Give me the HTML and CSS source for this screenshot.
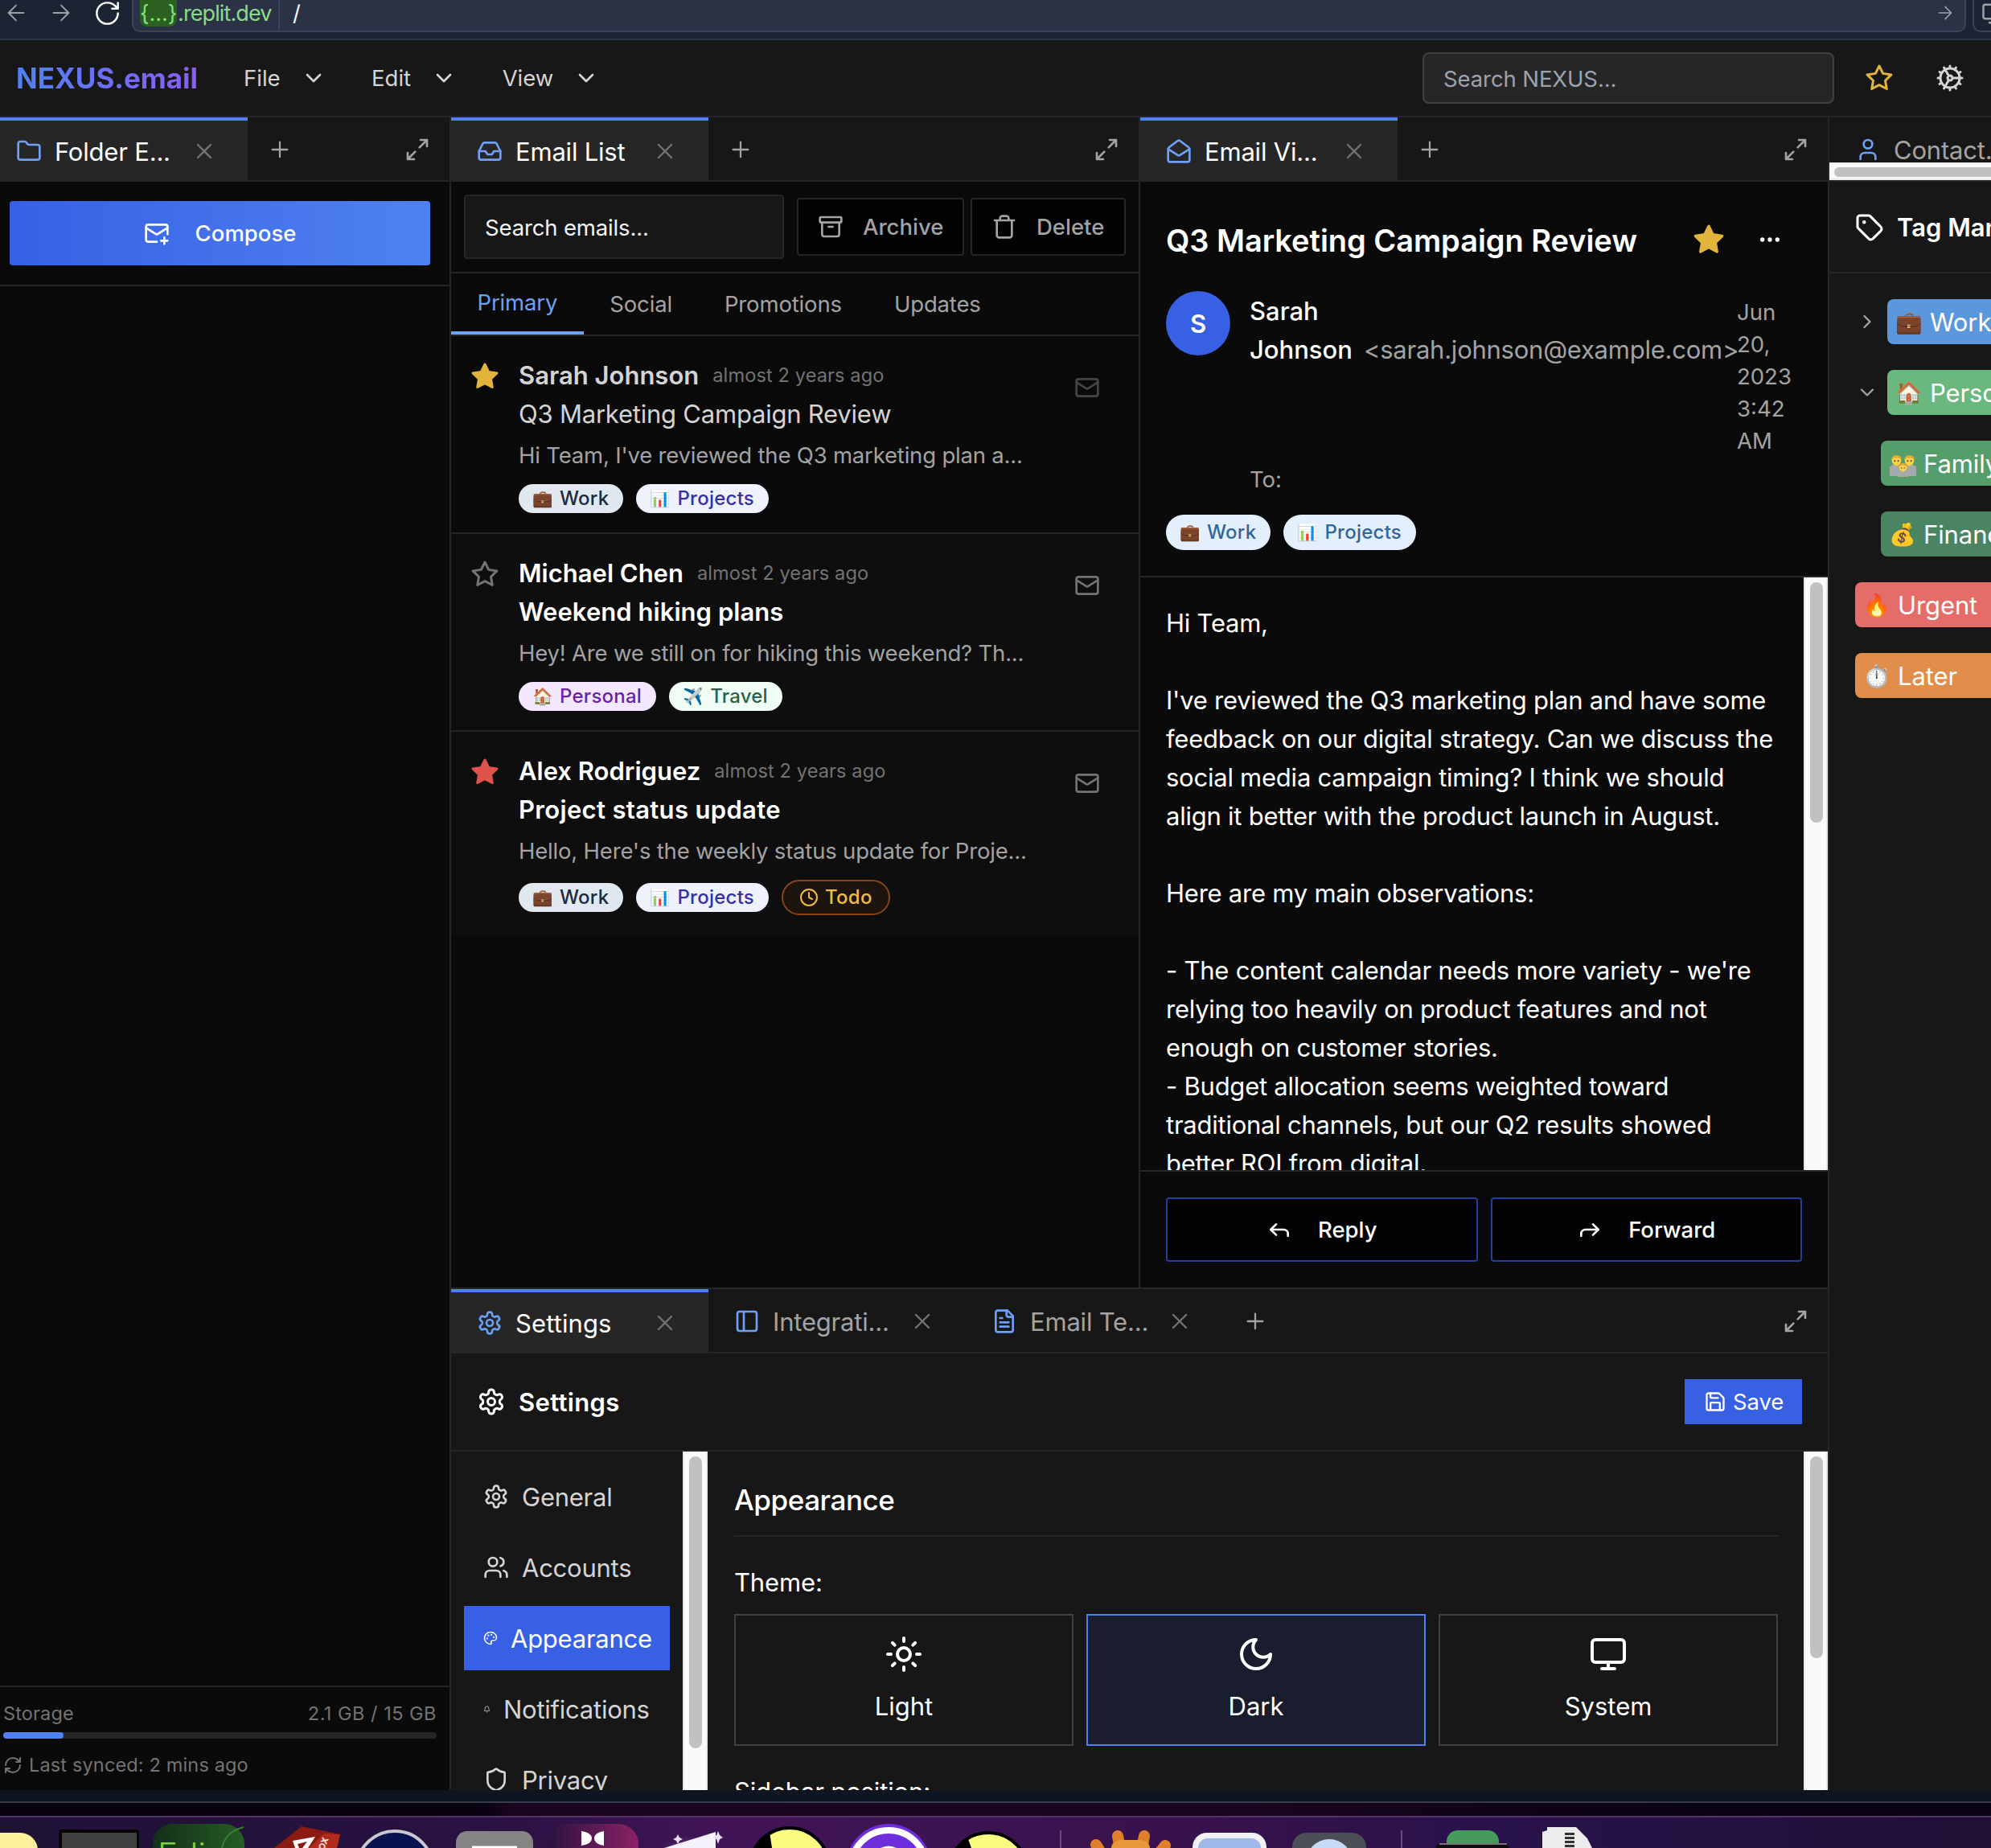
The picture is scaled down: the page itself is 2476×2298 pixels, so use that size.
FILE: index.html
```html
<!DOCTYPE html>
<html lang="en">
<head>
<meta charset="utf-8">
<title>NEXUS.email</title>
<link rel="stylesheet" href="styles.css">
</head>
<body>
<svg class="defs" aria-hidden="true">
  <symbol id="left" viewBox="0 0 24 24"><path d="m12 19-7-7 7-7M19 12H5"/></symbol>
  <symbol id="right" viewBox="0 0 24 24"><path d="m12 5 7 7-7 7M5 12h14"/></symbol>
  <symbol id="reload" viewBox="0 0 24 24"><path d="M21 12a9 9 0 1 1-9-9c2.52 0 4.93 1 6.74 2.74L21 8M21 3v5h-5"/></symbol>
  <symbol id="chev-down" viewBox="0 0 24 24"><path d="m6 9 6 6 6-6"/></symbol>
  <symbol id="chev-right" viewBox="0 0 24 24"><path d="m9 18 6-6-6-6"/></symbol>
  <symbol id="star" viewBox="0 0 24 24"><path d="m12 2 3.09 6.26L22 9.27l-5 4.87 1.18 6.88L12 17.77l-6.18 3.25L7 14.14 2 9.27l6.91-1.01L12 2z"/></symbol>
  <symbol id="cog" viewBox="0 0 24 24"><path d="M12 20a8 8 0 1 0 0-16 8 8 0 0 0 0 16ZM12 14a2 2 0 1 0 0-4 2 2 0 0 0 0 4ZM12 2v2M12 22v-2M17 20.66l-1-1.73M11 10.27 7 3.34M20.66 17l-1.73-1M3.34 7l1.73 1M14 12h8M2 12h2M20.66 7l-1.73 1M3.34 17l1.73-1M17 3.34l-1 1.73M11 13.73l-4 6.93"/></symbol>
  <symbol id="folder" viewBox="0 0 24 24"><path d="M20 20a2 2 0 0 0 2-2V8a2 2 0 0 0-2-2h-7.9a2 2 0 0 1-1.69-.9L9.6 3.9A2 2 0 0 0 7.93 3H4a2 2 0 0 0-2 2v13a2 2 0 0 0 2 2Z"/></symbol>
  <symbol id="close" viewBox="0 0 24 24"><path d="M18 6 6 18M6 6l12 12"/></symbol>
  <symbol id="plus" viewBox="0 0 24 24"><path d="M5 12h14M12 5v14"/></symbol>
  <symbol id="expand" viewBox="0 0 24 24"><path d="M15 3h6v6M9 21H3v-6M21 3l-7 7M3 21l7-7"/></symbol>
  <symbol id="inbox" viewBox="0 0 24 24"><path d="M22 12h-6l-2 3h-4l-2-3H2"/><path d="M5.45 5.11 2 12v6a2 2 0 0 0 2 2h16a2 2 0 0 0 2-2v-6l-3.45-6.89A2 2 0 0 0 16.76 4H7.24a2 2 0 0 0-1.79 1.11z"/></symbol>
  <symbol id="mail-open" viewBox="0 0 24 24"><path d="M21.2 8.4c.5.38.8.97.8 1.6v10a2 2 0 0 1-2 2H4a2 2 0 0 1-2-2V10a2 2 0 0 1 .8-1.6l8-6a2 2 0 0 1 2.4 0l8 6Z"/><path d="m22 10-8.97 5.7a1.94 1.94 0 0 1-2.06 0L2 10"/></symbol>
  <symbol id="mail" viewBox="0 0 24 24"><rect width="20" height="16" x="2" y="4" rx="2"/><path d="m22 7-8.97 5.7a1.94 1.94 0 0 1-2.06 0L2 7"/></symbol>
  <symbol id="mail-plus" viewBox="0 0 24 24"><path d="M22 13V6a2 2 0 0 0-2-2H4a2 2 0 0 0-2 2v12c0 1.1.9 2 2 2h8"/><path d="m22 7-8.97 5.7a1.94 1.94 0 0 1-2.06 0L2 7M19 16v6M16 19h6"/></symbol>
  <symbol id="archive" viewBox="0 0 24 24"><rect width="20" height="5" x="2" y="3" rx="1"/><path d="M4 8v11a2 2 0 0 0 2 2h12a2 2 0 0 0 2-2V8M10 12h4"/></symbol>
  <symbol id="trash" viewBox="0 0 24 24"><path d="M3 6h18M19 6v14c0 1-1 2-2 2H7c-1 0-2-1-2-2V6M8 6V4c0-1 1-2 2-2h4c1 0 2 1 2 2v2"/></symbol>
  <symbol id="dots" viewBox="0 0 24 24"><circle cx="12" cy="12" r="1"/><circle cx="19" cy="12" r="1"/><circle cx="5" cy="12" r="1"/></symbol>
  <symbol id="user" viewBox="0 0 24 24"><path d="M19 21v-2a4 4 0 0 0-4-4H9a4 4 0 0 0-4 4v2"/><circle cx="12" cy="7" r="4"/></symbol>
  <symbol id="users" viewBox="0 0 24 24"><path d="M16 21v-2a4 4 0 0 0-4-4H6a4 4 0 0 0-4 4v2"/><circle cx="9" cy="7" r="4"/><path d="M22 21v-2a4 4 0 0 0-3-3.87M16 3.13a4 4 0 0 1 0 7.75"/></symbol>
  <symbol id="tag" viewBox="0 0 24 24"><path d="M12.586 2.586A2 2 0 0 0 11.172 2H4a2 2 0 0 0-2 2v7.172a2 2 0 0 0 .586 1.414l8.704 8.704a2.426 2.426 0 0 0 3.42 0l6.58-6.58a2.426 2.426 0 0 0 0-3.42z"/><circle cx="7.5" cy="7.5" r=".5" fill="currentColor"/></symbol>
  <symbol id="reply" viewBox="0 0 24 24"><path d="m9 17-5-5 5-5"/><path d="M20 18v-2a4 4 0 0 0-4-4H4"/></symbol>
  <symbol id="forward" viewBox="0 0 24 24"><path d="m15 17 5-5-5-5"/><path d="M4 18v-2a4 4 0 0 1 4-4h12"/></symbol>
  <symbol id="gear" viewBox="0 0 24 24"><path d="M12.22 2h-.44a2 2 0 0 0-2 2v.18a2 2 0 0 1-1 1.73l-.43.25a2 2 0 0 1-2 0l-.15-.08a2 2 0 0 0-2.73.73l-.22.38a2 2 0 0 0 .73 2.73l.15.1a2 2 0 0 1 1 1.72v.51a2 2 0 0 1-1 1.74l-.15.09a2 2 0 0 0-.73 2.73l.22.38a2 2 0 0 0 2.73.73l.15-.08a2 2 0 0 1 2 0l.43.25a2 2 0 0 1 1 1.73V20a2 2 0 0 0 2 2h.44a2 2 0 0 0 2-2v-.18a2 2 0 0 1 1-1.73l.43-.25a2 2 0 0 1 2 0l.15.08a2 2 0 0 0 2.73-.73l.22-.39a2 2 0 0 0-.73-2.73l-.15-.08a2 2 0 0 1-1-1.74v-.5a2 2 0 0 1 1-1.74l.15-.09a2 2 0 0 0 .73-2.73l-.22-.38a2 2 0 0 0-2.73-.73l-.15.08a2 2 0 0 1-2 0l-.43-.25a2 2 0 0 1-1-1.73V4a2 2 0 0 0-2-2z"/><circle cx="12" cy="12" r="3"/></symbol>
  <symbol id="panel" viewBox="0 0 24 24"><rect width="18" height="18" x="3" y="3" rx="2"/><path d="M9 3v18"/></symbol>
  <symbol id="file" viewBox="0 0 24 24"><path d="M15 2H6a2 2 0 0 0-2 2v16a2 2 0 0 0 2 2h12a2 2 0 0 0 2-2V7Z"/><path d="M14 2v4a2 2 0 0 0 2 2h4M10 9H8M16 13H8M16 17H8"/></symbol>
  <symbol id="save" viewBox="0 0 24 24"><path d="M15.2 3a2 2 0 0 1 1.4.6l3.8 3.8a2 2 0 0 1 .6 1.4V19a2 2 0 0 1-2 2H5a2 2 0 0 1-2-2V5a2 2 0 0 1 2-2z"/><path d="M17 21v-7a1 1 0 0 0-1-1H8a1 1 0 0 0-1 1v7M7 3v4a1 1 0 0 0 1 1h7"/></symbol>
  <symbol id="palette" viewBox="0 0 24 24"><circle cx="13.5" cy="6.5" r=".5"/><circle cx="17.5" cy="10.5" r=".5"/><circle cx="8.5" cy="7.5" r=".5"/><circle cx="6.5" cy="12.5" r=".5"/><path d="M12 2C6.5 2 2 6.5 2 12s4.5 10 10 10c.926 0 1.648-.746 1.648-1.688 0-.437-.18-.835-.437-1.125-.29-.289-.438-.652-.438-1.125a1.64 1.64 0 0 1 1.668-1.668h1.996c3.051 0 5.555-2.503 5.555-5.554C21.965 6.012 17.461 2 12 2z"/></symbol>
  <symbol id="bell" viewBox="0 0 24 24"><path d="M6 8a6 6 0 0 1 12 0c0 7 3 9 3 9H3s3-2 3-9M10.3 21a1.94 1.94 0 0 0 3.4 0"/></symbol>
  <symbol id="shield" viewBox="0 0 24 24"><path d="M20 13c0 5-3.5 7.5-7.66 8.95a1 1 0 0 1-.67-.01C7.5 20.5 4 18 4 13V6a1 1 0 0 1 1-1c2 0 4.5-1.2 6.24-2.72a1.17 1.17 0 0 1 1.52 0C14.51 3.81 17 5 19 5a1 1 0 0 1 1 1z"/></symbol>
  <symbol id="sun" viewBox="0 0 24 24"><circle cx="12" cy="12" r="4"/><path d="M12 2v2M12 20v2M4.93 4.93l1.41 1.41M17.66 17.66l1.41 1.41M2 12h2M20 12h2M6.34 17.66l-1.41 1.41M19.07 4.93l-1.41 1.41"/></symbol>
  <symbol id="moon" viewBox="0 0 24 24"><path d="M12 3a6 6 0 0 0 9 9 9 9 0 1 1-9-9Z"/></symbol>
  <symbol id="monitor" viewBox="0 0 24 24"><rect width="20" height="14" x="2" y="3" rx="2"/><path d="M8 21h8M12 17v4"/></symbol>
  <symbol id="sync" viewBox="0 0 24 24"><path d="M3 12a9 9 0 0 1 9-9 9.75 9.75 0 0 1 6.74 2.74L21 8M21 3v5h-5M21 12a9 9 0 0 1-9 9 9.75 9.75 0 0 1-6.74-2.74L3 16M8 16H3v5"/></symbol>
  <symbol id="clock" viewBox="0 0 24 24"><circle cx="12" cy="12" r="10"/><path d="M12 6v6l4 2"/></symbol>
  <symbol id="person" viewBox="0 0 16 20"><path d="M0 20v-4q0-5 8-5t8 5v4z" fill="#a4a9ac"/><path d="M6 10h4v3H6z" fill="#e8b93c"/><circle cx="8" cy="6.5" r="5.500" fill="#fbd34f"/><path d="M2 6Q2 0 8 0t6 6q-2-3-6-3T2 6z" fill="#e3a92c"/><circle cx="6" cy="7" r=".9" fill="#4b3514"/><circle cx="10" cy="7" r=".9" fill="#4b3514"/></symbol>
</svg>

<div class="browser">
  <svg class="i nav-back"><use href="#left"/></svg>
  <svg class="i nav-fwd"><use href="#right"/></svg>
  <svg class="i nav-reload"><use href="#reload"/></svg>
  <div class="url">
    <span class="host"><span class="chip">{...}</span><span class="domain">.replit.dev</span></span>
    <span class="path">/</span>
    <svg class="i go"><use href="#right"/></svg>
  </div>
  <div class="devbox"><svg class="i"><use href="#monitor"/></svg></div>
</div>

<header class="top">
  <div class="brand">NEXUS.email</div>
  <nav class="menus">
    <span class="menu"><span>File</span><svg class="i s32"><use href="#chev-down"/></svg></span>
    <span class="menu"><span>Edit</span><svg class="i s32"><use href="#chev-down"/></svg></span>
    <span class="menu"><span>View</span><svg class="i s32"><use href="#chev-down"/></svg></span>
  </nav>
  <div class="topsearch">Search NEXUS...</div>
  <svg class="i s36 gold"><use href="#star"/></svg>
  <svg class="i s36 cogicon"><use href="#cog"/></svg>
</header>

<main class="app">
  <section class="panel folders">
    <div class="tabbar">
      <div class="tab active"><svg class="i s32"><use href="#folder"/></svg><span class="label">Folder E...</span><svg class="i s32 x"><use href="#close"/></svg></div>
      <svg class="i s32 add"><use href="#plus"/></svg>
      <svg class="i s32 max"><use href="#expand"/></svg>
    </div>
    <div class="composebox"><div class="compose"><svg class="i s32"><use href="#mail-plus"/></svg><span>Compose</span></div></div>
    <div class="storage">
      <div class="quota"><span>Storage</span><span class="used">2.1 GB / 15 GB</span></div>
      <div class="meter"><div class="fill" style="width:14%"></div></div>
      <div class="synced"><svg class="i"><use href="#sync"/></svg><span>Last synced: 2 mins ago</span></div>
    </div>
  </section>

  <div class="center">
    <div class="upper">
      <section class="panel list">
        <div class="tabbar">
          <div class="tab active"><svg class="i s32"><use href="#inbox"/></svg><span class="label">Email List</span><svg class="i s32 x"><use href="#close"/></svg></div>
          <svg class="i s32 add"><use href="#plus"/></svg>
          <svg class="i s32 max"><use href="#expand"/></svg>
        </div>
        <div class="tools">
          <div class="find">Search emails...</div>
          <div class="actions">
            <div class="tool"><svg class="i s32"><use href="#archive"/></svg><span>Archive</span></div>
            <div class="tool del"><svg class="i s32"><use href="#trash"/></svg><span>Delete</span></div>
          </div>
        </div>
        <div class="filters"><span class="on">Primary</span><span>Social</span><span>Promotions</span><span>Updates</span></div>
        <article class="mail read">
          <svg class="i s36 st solid gold"><use href="#star"/></svg>
          <div class="info">
            <div class="who"><b>Sarah Johnson</b><time>almost 2 years ago</time></div>
            <div class="subj">Q3 Marketing Campaign Review</div>
            <div class="prev">Hi Team, I've reviewed the Q3 marketing plan a...</div>
            <div class="pills"><span class="pill work"><i>💼</i>Work</span><span class="pill proj"><i>📊</i>Projects</span></div>
          </div>
          <svg class="i s32 env"><use href="#mail"/></svg>
        </article>
        <article class="mail">
          <svg class="i s36 st"><use href="#star"/></svg>
          <div class="info">
            <div class="who"><b>Michael Chen</b><time>almost 2 years ago</time></div>
            <div class="subj">Weekend hiking plans</div>
            <div class="prev">Hey! Are we still on for hiking this weekend? Th...</div>
            <div class="pills"><span class="pill pers"><i>🏠</i>Personal</span><span class="pill trav"><i>✈️</i>Travel</span></div>
          </div>
          <svg class="i s32 env"><use href="#mail"/></svg>
        </article>
        <article class="mail last">
          <svg class="i s36 st solid red"><use href="#star"/></svg>
          <div class="info">
            <div class="who"><b>Alex Rodriguez</b><time>almost 2 years ago</time></div>
            <div class="subj wide">Project status update</div>
            <div class="prev">Hello, Here's the weekly status update for Proje...</div>
            <div class="pills"><span class="pill work"><i>💼</i>Work</span><span class="pill proj"><i>📊</i>Projects</span><span class="pill todo"><svg class="i"><use href="#clock"/></svg>Todo</span></div>
          </div>
          <svg class="i s32 env"><use href="#mail"/></svg>
        </article>
      </section>

      <section class="panel view">
        <div class="tabbar">
          <div class="tab active"><svg class="i s32"><use href="#mail-open"/></svg><span class="label">Email Vi...</span><svg class="i s32 x"><use href="#close"/></svg></div>
          <svg class="i s32 add"><use href="#plus"/></svg>
          <svg class="i s32 max"><use href="#expand"/></svg>
        </div>
        <div class="vhead">
          <div class="vtitle"><h1>Q3 Marketing Campaign Review</h1><svg class="i s40 solid gold"><use href="#star"/></svg><svg class="i s32 more"><use href="#dots"/></svg></div>
          <div class="from">
            <div class="avatar">S</div>
            <div class="name">Sarah<br>Johnson</div>
            <div class="addr">&lt;sarah.johnson@example.com&gt;</div>
            <div class="date">Jun<br>20,<br>2023<br>3:42<br>AM</div>
          </div>
          <div class="to">To:</div>
          <div class="pills"><span class="pill blue"><i>💼</i>Work</span><span class="pill blue"><i>📊</i>Projects</span></div>
        </div>
        <div class="vbody">
          <div class="text">Hi Team,<br><br>I've reviewed the Q3 marketing plan and have some<br>feedback on our digital strategy. Can we discuss the<br>social media campaign timing? I think we should<br>align it better with the product launch in August.<br><br>Here are my main observations:<br><br>- The content calendar needs more variety - we're<br>relying too heavily on product features and not<br>enough on customer stories.<br>- Budget allocation seems weighted toward<br>traditional channels, but our Q2 results showed<br>better ROI from digital.</div>
          <div class="sbar narrow"><div class="thumb th-mail"></div></div>
        </div>
        <div class="reply">
          <div class="btn"><svg class="i s32"><use href="#reply"/></svg><span>Reply</span></div>
          <div class="btn"><svg class="i s32"><use href="#forward"/></svg><span>Forward</span></div>
        </div>
      </section>
    </div>

    <section class="settings">
      <div class="tabbar">
        <div class="tab active"><svg class="i s32"><use href="#gear"/></svg><span class="label roomy">Settings</span><svg class="i s32 x"><use href="#close"/></svg></div>
        <div class="tab"><svg class="i s32"><use href="#panel"/></svg><span class="label">Integrati...</span><svg class="i s32 x"><use href="#close"/></svg></div>
        <div class="tab"><svg class="i s32"><use href="#file"/></svg><span class="label">Email Te...</span><svg class="i s32 x"><use href="#close"/></svg></div>
        <svg class="i s32 add"><use href="#plus"/></svg>
        <svg class="i s32 max"><use href="#expand"/></svg>
      </div>
      <div class="shead"><svg class="i s36"><use href="#gear"/></svg><h2>Settings</h2><div class="save"><svg class="i s28"><use href="#save"/></svg><span>Save</span></div></div>
      <div class="sbody">
        <div class="snav">
          <div class="sitem"><svg class="i s32"><use href="#gear"/></svg><span>General</span></div>
          <div class="sitem"><svg class="i s32"><use href="#users"/></svg><span>Accounts</span></div>
          <div class="sitem sel"><svg class="i s18"><use href="#palette"/></svg><span>Appearance</span></div>
          <div class="sitem"><svg class="i s9"><use href="#bell"/></svg><span>Notifications</span></div>
          <div class="sitem"><svg class="i s32"><use href="#shield"/></svg><span>Privacy</span></div>
        </div>
        <div class="sbar"><div class="thumb th-nav"></div></div>
        <div class="smain">
          <h3>Appearance</h3>
          <div class="lbl">Theme:</div>
          <div class="themes">
            <div class="theme"><svg class="i s48"><use href="#sun"/></svg><span>Light</span></div>
            <div class="theme on"><svg class="i s48"><use href="#moon"/></svg><span>Dark</span></div>
            <div class="theme"><svg class="i s48"><use href="#monitor"/></svg><span>System</span></div>
          </div>
          <div class="lbl">Sidebar position:</div>
        </div>
        <div class="sbar narrow"><div class="thumb th-main"></div></div>
      </div>
    </section>
  </div>

  <section class="tags">
    <div class="tabclip"><div class="tab"><svg class="i s32"><use href="#user"/></svg><span class="label">Contact...</span></div></div>
    <div class="hbar"><div class="hthumb"></div></div>
    <div class="thead"><svg class="i s36"><use href="#tag"/></svg><span>Tag Manager</span></div>
    <div class="tlist">
      <div class="trow parent"><svg class="i s28"><use href="#chev-right"/></svg><span class="tg c1"><i>💼</i>Work</span></div>
      <div class="trow parent"><svg class="i s28"><use href="#chev-down"/></svg><span class="tg c2"><i>🏠</i>Personal</span></div>
      <div class="trow child"><span class="tg c3"><svg class="family" viewBox="0 0 33 33"><use href="#person" x="0" y="1" width="17" height="31"/><use href="#person" x="16" y="1" width="17" height="31"/><path d="M0 20h33v12H0z" fill="#a4a9ac"/><use href="#person" x="9" y="16" width="15" height="17"/></svg>Family</span></div>
      <div class="trow child"><span class="tg c4"><i>💰</i>Finance</span></div>
      <div class="trow"><span class="tg c5"><i>🔥</i>Urgent</span></div>
      <div class="trow"><span class="tg c6"><i>⏱️</i>Later</span></div>
    </div>
  </section>
</main>

<footer class="desk">
  <div class="edge"></div>
  <div class="wall"></div>
  <svg class="dock" viewBox="0 0 2476 38" width="2476" height="38">
    <defs>
      <linearGradient id="dg"><stop offset="0" stop-color="#1e1236"/><stop offset=".25" stop-color="#2a1242"/><stop offset=".36" stop-color="#411458"/><stop offset=".6" stop-color="#38124c"/><stop offset=".76" stop-color="#28124a"/><stop offset="1" stop-color="#1f1034"/></linearGradient>
      <linearGradient id="mg"><stop offset="0" stop-color="#2a1240"/><stop offset="1" stop-color="#8c2265"/></linearGradient>
      <linearGradient id="gg"><stop offset="0" stop-color="#14301a"/><stop offset="1" stop-color="#265c25"/></linearGradient>
      <radialGradient id="ig" cx=".5" cy=".7"><stop offset="0" stop-color="#f4efff"/><stop offset=".5" stop-color="#8c7aa8"/><stop offset="1" stop-color="#5a3080" stop-opacity="0"/></radialGradient>
    </defs>
    <rect width="2476" height="38" fill="url(#dg)"/>
    <rect x="-60" y="19" width="107" height="60" rx="22" fill="#fdf19b"/>
    <rect x="73" y="15" width="100" height="50" rx="4" fill="#050505"/><rect x="77" y="19" width="93" height="40" fill="#3f3f3f"/>
    <rect x="190" y="8" width="114" height="80" rx="25" fill="url(#gg)"/><path d="M276 38q4-20 27-26" fill="none" stroke="#3c7f31" stroke-width="2"/>
    <text x="196" y="62" font-family="Inter" font-weight="300" font-size="42" fill="#83d13c">Edi</text>
    <path d="m375 11 48 10-4 17h-78z" fill="#8b1a12"/><path d="m423 21-20-1-18 18h34z" fill="#b12a1c"/><path d="m364 29 28-5-9 14h-7l6-8-12 3 2 5h-5z" fill="#fff"/>
    <text x="397" y="56" transform="rotate(-68 397 56)" font-family="Inter" font-weight="800" font-size="11" fill="#f3ded8">HBOX</text>
    <circle cx="491" cy="65" r="48" fill="#071250" stroke="#c9c9d2" stroke-width="4"/>
    <rect x="567" y="17" width="96" height="60" rx="14" fill="#858585"/><path d="M587 37h56" stroke="#fff" stroke-width="3"/>
    <rect x="681" y="8" width="113" height="80" rx="25" fill="url(#mg)"/><path d="M723 17q13 2 13 9t-13 9zM751 17q-12 2-12 9t12 9z" fill="#fff"/>
    <circle cx="856" cy="48" r="42" fill="url(#ig)"/><path d="m826 38 64-20v20z" fill="#f5f1fb"/><path d="m843 21 2 4 4 2-4 2-2 4-2-4-4-2 4-2zM893 17l2 5 4 3-4 2-2 6-2-6-4-2 4-3z" fill="#e8e0f5"/>
    <circle cx="982" cy="62" r="49" fill="#f9fc7e" stroke="#000" stroke-width="4"/><path d="M937 38q7-14 20-20l3 20z"/>
    <circle cx="1105" cy="61" r="53" fill="#6d2fdc"/><circle cx="1105" cy="63" r="47" fill="none" stroke="#fff" stroke-width="8"/><path d="M1095 38q10-5 20 0z" fill="#fff"/>
    <circle cx="1229" cy="68" r="49" fill="#f9fc7e" stroke="#000" stroke-width="4"/><path d="M1190 38q5-6 14-11l4 11z"/>
    <path d="M1319 16v22M1743 16v22" stroke="#6b4a80" stroke-width="2"/>
    <path d="M1370 45l-7-11M1394 45l-4-22M1419 45l4-22M1441 45l8-10" stroke="#e0802c" stroke-width="14" stroke-linecap="round"/><rect x="1382" y="28" width="48" height="20" rx="12" fill="#e79838"/>
    <rect x="1483" y="19" width="92" height="60" rx="18" fill="#f1f1f3"/><rect x="1490" y="26" width="78" height="60" rx="12" fill="#9fb8ea"/>
    <rect x="1607" y="19" width="92" height="60" rx="18" fill="#4b4f56"/><circle cx="1653" cy="56" r="29" fill="#c6dbf5"/>
    <rect x="1799" y="16" width="65" height="40" rx="14" fill="#469a5b"/><path d="M1785 38l3-5h86l3 5z" fill="#0c0c10"/><path d="M1790 33h84" stroke="#777" stroke-width="2"/>
    <path d="M1918 38V18l6-2v-4h36l14 14 6 12z" fill="#ececee"/><path d="M1952 19v19" stroke="#333" stroke-width="12" stroke-dasharray="3 2"/>
  </svg>
</footer>
</body>
</html>
```
FILE: styles.css
```css
* { box-sizing: border-box; }
body { margin: 0; width: 2476px; height: 2298px; overflow: hidden; background: #0a0a0a; color: #fff; font-family: Inter, "Liberation Sans", "Noto Color Emoji", sans-serif; font-size: 31px; line-height: 48px; display: flex; flex-direction: column; white-space: nowrap; }
h1, h2, h3 { margin: 0; font-weight: 600; }
i { font-style: normal; }
.defs { position: absolute; width: 0; height: 0; }
.i { flex: none; fill: none; stroke: currentColor; stroke-width: 2; stroke-linecap: round; stroke-linejoin: round; display: block; }
.s9 { width: 9px; height: 9px; }
.s18 { width: 18px; height: 18px; }
.s28 { width: 28px; height: 28px; }
.s32 { width: 32px; height: 32px; }
.s36 { width: 36px; height: 36px; }
.s40 { width: 40px; height: 40px; }
.s48 { width: 48px; height: 48px; }
.gold { color: #e2b43b; }
.red { color: #e0524c; }
.solid { fill: currentColor; }

/* browser toolbar */
.browser { height: 50px; flex: none; background: #1c2333; border-bottom: 2px solid #2b3245; display: flex; align-items: flex-start; color: #9da2a6; overflow: hidden; }
.nav-back, .nav-fwd { width: 32px; height: 32px; stroke-width: 1.5; }
.nav-back { margin-left: 4px; }
.nav-fwd { margin-left: 24px; }
.nav-reload { width: 35px; height: 35px; margin: -1px 0 0 24px; color: #fff; stroke-width: 1.7; }
.url { flex: none; margin-left: 13px; width: 2281px; height: 40px; background: #2b3245; border: 2px solid #3c445c; border-top: 0; border-radius: 0 0 10px 10px; display: flex; align-items: flex-start; font-size: 27px; line-height: 33px; }
.host { width: 182px; height: 38px; border-right: 2px solid #3c445c; padding-left: 8px; display: flex; }
.chip { width: 46px; height: 33px; background: #2c6020; color: #86e07f; border-radius: 0 0 9px 9px; text-align: center; }
.domain { color: #8bdc89; letter-spacing: -.9px; padding-left: 1px; }
.path { padding-left: 16px; color: #f5f9fc; }
.go { width: 26px; height: 26px; margin: 3px 11px 0 auto; stroke-width: 1.5; }
.devbox { flex: none; width: 60px; height: 40px; margin-left: 8px; border: 2px solid #3c445c; border-top: 0; border-radius: 0 0 0 10px; padding: 2px 0 0 9px; }
.devbox .i { width: 30px; height: 30px; }

/* application header */
.top { height: 96px; flex: none; background: #171717; border-bottom: 2px solid #262626; display: flex; align-items: center; padding: 0 33px 0 20px; }
.brand { font-weight: 700; font-size: 35px; background: linear-gradient(90deg, #4f82f0, #8b5cf6); -webkit-background-clip: text; background-clip: text; color: transparent; width: 227px; }
.menus { display: flex; gap: 56.5px; margin-left: 56px; font-size: 27.5px; color: #d4d4d4; }
.menu { display: flex; align-items: center; gap: 25px; }
.topsearch { width: 512px; height: 64px; margin-left: auto; margin-right: 38px; background: #262626; border: 2px solid #404040; border-radius: 8px; padding-left: 24px; font-size: 27.5px; line-height: 62px; letter-spacing: -.1px; color: #9ca3af; }
.cogicon { margin-left: 52px; color: #d4d4d4; }

.app { height: 2080px; flex: none; display: flex; overflow: hidden; }
.panel { display: flex; flex-direction: column; border-right: 2px solid #262626; }
.folders { width: 561px; flex: none; }
.center { width: 1714px; flex: none; display: flex; flex-direction: column; }
.upper { height: 1455px; flex: none; display: flex; }
.list, .view { width: 857px; }

/* tab bars */
.tabbar { height: 80px; flex: none; background: #171717; box-shadow: inset 0 -2px #262626; display: flex; align-items: center; color: #a3a3a3; padding-right: 24px; }
.tab { width: 320px; height: 80px; flex: none; display: flex; align-items: center; padding: 0 38px 0 32px; color: #a3a3a3; }
.tab .i { color: #6ea0f6; }
.tab .i.x { color: #737373; stroke-width: 1.8; }
.tab.active { background: #262626; border-top: 4px solid #4f82f0; color: #fff; }
.label { flex: 1; padding: 2px 0 0 16px; letter-spacing: -.2px; }
.label.roomy { letter-spacing: .1px; }
.folders .tab { width: 308px; padding: 0 38px 0 20px; }
.add { margin-left: 24px; stroke-width: 1.7; }
.max { margin-left: auto; }

/* folder panel */
.composebox { height: 130px; flex: none; border-bottom: 2px solid #262626; padding: 24px 24px 24px 12px; }
.compose { height: 80px; border-radius: 4px; background: linear-gradient(90deg, #3760e4, #4f82f0); display: flex; align-items: center; justify-content: center; gap: 32px; font-size: 27.5px; font-weight: 500; }
.storage { margin-top: auto; height: 130px; border-top: 2px solid #262626; padding: 13px 16px 0 4px; font-size: 23.5px; line-height: 40px; letter-spacing: .15px; color: #737373; }
.quota { display: flex; justify-content: space-between; }
.used { letter-spacing: .5px; }
.meter { height: 8px; margin-top: 3px; border-radius: 4px; background: #262626; }
.fill { height: 8px; border-radius: 4px; background: #4f82f0; }
.synced { display: flex; align-items: center; gap: 8px; margin-top: 13px; }
.synced .i { width: 24px; height: 24px; }

/* email list */
.tools { height: 114px; flex: none; border-bottom: 2px solid #262626; padding: 0 16px; display: flex; align-items: center; justify-content: space-between; font-size: 27.5px; }
.find { width: 398px; height: 80px; background: #171717; border: 2px solid #262626; border-radius: 4px; padding-left: 24px; line-height: 78px; letter-spacing: -.15px; color: #f1f5f9; }
.actions { display: flex; gap: 8px; }
.tool { width: 208px; height: 72px; background: #020205; border: 2px solid #262626; border-radius: 4px; display: flex; align-items: center; gap: 24px; padding-left: 24px; color: #a3a3a3; font-weight: 500; }
.del { width: 193px; }
.filters { height: 78px; flex: none; border-bottom: 2px solid #262626; display: flex; font-size: 27.5px; color: #a3a3a3; line-height: 76px; letter-spacing: -.15px; }
.filters span { padding: 0 32.5px; }
.filters .on { color: #6ea0f6; border-bottom: 4px solid #6ea0f6; line-height: 73px; }
.mail { height: 246px; flex: none; padding: 24px; display: flex; background: #0e0e0e; border-bottom: 2px solid #262626; }
.mail.read { background: #0a0a0a; }
.mail.last { height: 252px; border: 0; }
.st { margin: 8px 0 0 0; color: #737373; }
.st.gold { color: #e2b43b; }
.st.red { color: #e0524c; }
.info { width: 660px; margin-left: 24px; padding-top: 1px; }
.who { display: flex; align-items: center; gap: 17px; }
.who b { font-weight: 600; }
.who time { font-size: 23.6px; letter-spacing: .1px; color: #737373; }
.subj { font-weight: 600; letter-spacing: .05px; }
.subj.wide { letter-spacing: .33px; }
.read .subj { font-weight: 400; letter-spacing: -.22px; color: #d4d4d4; }
.read b { color: #d4d4d4; }
.prev { font-size: 27.5px; line-height: 40px; margin: 7px 0 16px; letter-spacing: -.19px; color: #a3a3a3; }
.env { margin: 24px 0 0 31px; color: #737373; }
.read .env { color: #454545; }
.pills { display: flex; align-items: center; gap: 16px; }
.pill { height: 36px; border-radius: 22px; display: flex; align-items: center; padding: 0 18px; font-size: 24px; font-weight: 550; line-height: 36px; letter-spacing: .25px; }
.pill i { width: 24px; margin-right: 9px; font-size: 20.5px; letter-spacing: 0; display: flex; justify-content: center; }
.work { background: #e2e8f0; color: #1e293b; }
.proj { background: #eef2ff; color: #3730a3; }
.pers { background: #f3e8ff; color: #6b21a8; }
.trav { background: #f0fdf4; color: #2a6147; }
.todo { height: 44px; background: #1c140d; border: 2px solid #8a4419; color: #f0bc45; padding: 0 20px; }
.todo .i { width: 24px; height: 24px; margin-right: 8px; }

/* email view */
.vhead { height: 492px; flex: none; border-bottom: 2px solid #262626; padding: 40px 32px 0; }
.vtitle { height: 64px; display: flex; align-items: center; }
.vtitle h1 { font-size: 38px; letter-spacing: -.05px; flex: 1; padding-top: 1px; }
.more { margin: 0 24px 0 40px; }
.from { display: flex; margin-top: 32px; height: 214px; }
.avatar { width: 80px; height: 80px; border-radius: 50%; background: #3760e4; font-weight: 600; line-height: 82px; text-align: center; }
.name { margin: 1px 0 0 24px; width: 142px; font-weight: 500; }
.addr { margin-top: 49px; width: 464px; letter-spacing: -.25px; color: #a3a3a3; }
.date { margin-top: 6px; font-size: 27.5px; line-height: 40px; color: #a3a3a3; }
.to { margin-left: 104px; height: 40px; font-size: 27.5px; line-height: 40px; color: #a3a3a3; }
.vhead .pills { margin-top: 24px; }
.pill.blue { height: 44px; background: #e3effd; color: #2f66a0; }
.vbody { height: 737px; flex: none; display: flex; justify-content: space-between; overflow: hidden; }
.text { padding: 33px 0 0 32px; height: 900px; letter-spacing: -.24px; }
.sbar { width: 31px; flex: none; background: #fafafa; border: 2px solid #e8e8e8; border-width: 0 2px; padding: 6px 0 0 6px; }
.sbar.narrow { width: 30px; }
.thumb { width: 16px; border-radius: 8px; background: #c1c1c1; }
.th-mail { height: 299px; }
.th-nav { height: 363px; }
.th-main { height: 251px; }
.reply { height: 146px; flex: none; border-top: 2px solid #262626; padding: 32px; display: flex; gap: 16px; }
.btn { flex: 1; height: 80px; background: #020205; border: 2px solid #233f9b; border-radius: 4px; display: flex; align-items: center; justify-content: center; gap: 32px; font-size: 27.5px; font-weight: 500; }

/* settings */
.settings { flex: 1; background: #171717; border-top: 2px solid #262626; border-right: 2px solid #262626; display: flex; flex-direction: column; }
.shead { height: 122px; flex: none; border-bottom: 2px solid #262626; padding: 0 32px; display: flex; align-items: center; gap: 16px; }
.shead h2 { font-size: 31px; letter-spacing: .35px; flex: 1; padding-top: 2px; }
.save { width: 146px; height: 56px; background: #3760e4; display: flex; align-items: center; padding-left: 24px; gap: 8px; font-size: 27.5px; letter-spacing: -.1px; }
.sbody { flex: 1; display: flex; overflow: hidden; }
.snav { width: 288px; flex: none; padding: 16px; display: flex; flex-direction: column; gap: 8px; color: #d4d4d4; letter-spacing: -.25px; }
.sitem { height: 80px; flex: none; display: flex; align-items: center; gap: 16px; padding-left: 24px; }
.sitem span { padding-top: 2px; }
.sitem.sel { background: #3760e4; color: #fff; }
.smain { width: 1363px; flex: none; padding: 32px 32px 0 33px; }
.smain h3 { font-size: 35px; font-weight: 500; line-height: 56px; letter-spacing: -.45px; padding-bottom: 16px; border-bottom: 2px solid #262626; }
.lbl { margin: 32px 0 16px; height: 48px; padding-top: 1px; letter-spacing: -.15px; }
.themes { display: flex; gap: 16px; }
.theme { flex: 1; height: 164px; border: 2px solid #404040; display: flex; flex-direction: column; align-items: center; gap: 17px; padding-top: 24px; }
.theme.on { border-color: #4f82f0; background: #1a1d2e; }

/* tag manager */
.tags { flex: 1; min-width: 0; background: #171717; overflow: hidden; }
.tabclip { height: 56px; overflow: hidden; }
.hbar { height: 22px; background: #fafafa; border-top: 2px solid #ececec; border-bottom: 2px solid #ececec; padding: 4px 0 0 6px; }
.hthumb { width: 400px; height: 12px; border-radius: 6px; background: #c1c1c1; }
.thead { height: 116px; border-top: 2px solid #262626; border-bottom: 2px solid #262626; padding: 2px 0 0 32px; display: flex; align-items: center; gap: 16px; font-weight: 600; }
.tlist { padding: 32px 0 0 32px; display: flex; flex-direction: column; gap: 32px; }
.trow { display: flex; align-items: center; color: #a3a3a3; }
.trow.parent { padding-left: 1px; gap: 11px; }
.trow.child { padding-left: 32px; }
.tg { width: 260px; flex: none; height: 56px; border-radius: 8px; padding: 1px 0 0 11px; display: flex; align-items: center; color: #fff; letter-spacing: -.1px; }
.tg i { width: 33px; margin-right: 9px; font-size: 27px; display: flex; justify-content: center; }
.family { width: 33px; height: 33px; margin-right: 9px; flex: none; }
.c1 { background: #5b97dc; }
.c2 { background: #6ab87e; }
.c3 { background: #569d6c; }
.c4 { background: #4a8460; }
.c5 { background: #e46c69; }
.c6 { background: #e08e4a; }

/* desktop and dock */
.desk { height: 72px; flex: none; background: #0e1420; padding-top: 14px; }
.edge { height: 2px; background: #3a3d47; }
.wall { height: 18px; border-bottom: 2px solid #553366; background: linear-gradient(90deg, #070110 0 600px, #1b0622 640px, #1a0520 1500px, #090212 2100px); }
.dock { display: block; }
```
